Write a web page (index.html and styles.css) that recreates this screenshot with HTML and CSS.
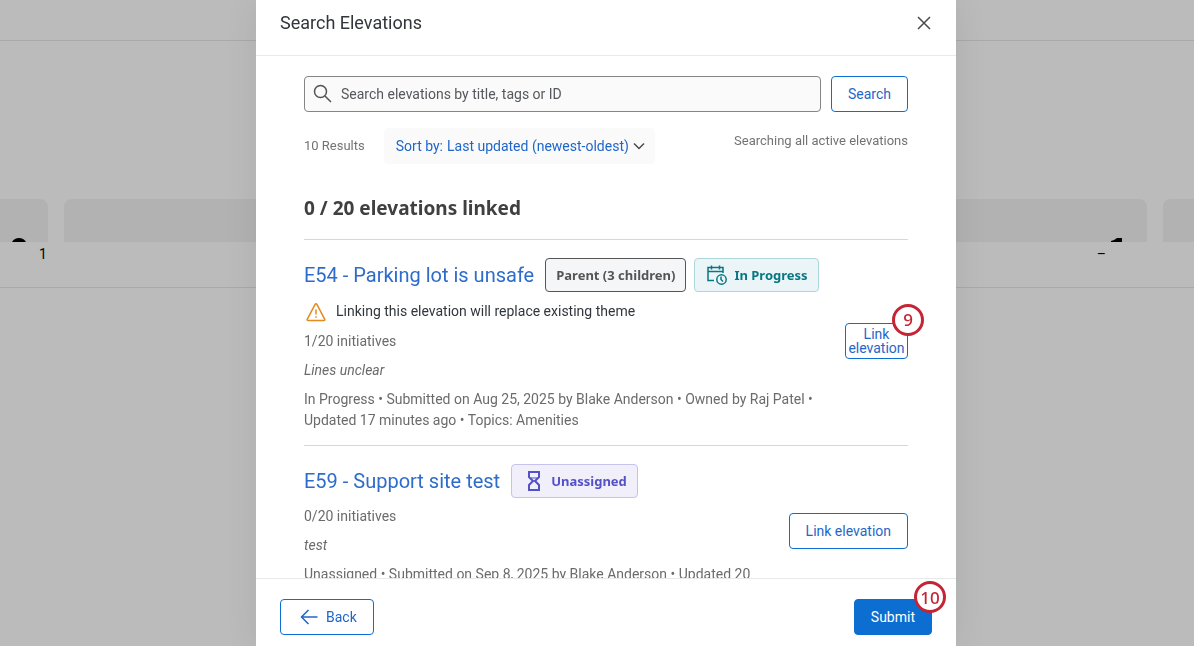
FILE: index.html
```html
<!DOCTYPE html>
<html lang="en">
<head>
<meta charset="UTF-8" />
<meta name="viewport" content="width=device-width, initial-scale=1" />
<title>Search Elevations</title>
<link rel="stylesheet" href="styles.css">
</head>
<body>

<!-- dashboard behind the dialog -->
<div class="page">
  <div class="page-top"></div>
  <div class="page-space"></div>
  <div class="cards">
    <div class="card card-left">
      <svg width="14" height="4" viewBox="0 0 14 4"><path d="M0 4C1.500 1.300 4 0 7 0s5.500 1.300 7 4z"/></svg>
    </div>
    <div class="card card-main">
      <svg width="11" height="4" viewBox="0 0 11 4"><path d="M0 4V3l3-1 3-2h5v4z"/></svg>
    </div>
    <div class="card card-right"></div>
  </div>
  <div class="counts">
    <span>1</span>
    <span>–</span>
  </div>
</div>

<div class="overlay">
  <div class="modal" role="dialog" aria-labelledby="modalTitle">
    <header class="modal-header">
      <h1 id="modalTitle">Search Elevations</h1>
      <button class="close" aria-label="Close">
        <svg width="16" height="16" viewBox="0 0 16 16"><path d="M2 2l12 12M14 2L2 14"/></svg>
      </button>
    </header>

    <main class="modal-body">
      <form class="search">
        <div class="search-box">
          <svg width="20" height="20" viewBox="0 0 20 20"><circle cx="7.500" cy="7.500" r="6"/><path d="M12 12l6 6"/></svg>
          <input type="text" aria-label="Search elevations" placeholder="Search elevations by title, tags or ID">
        </div>
        <button type="button" class="btn">Search</button>
      </form>

      <div class="filters">
        <span class="results">10 Results</span>
        <div class="sort">
          <label for="sort">Sort by:</label>
          <select id="sort">
            <option>Last updated (newest-oldest)</option>
          </select>
          <svg width="12" height="8" viewBox="0 0 12 8"><path d="M1 1.500l5 5 5-5"/></svg>
        </div>
        <span class="scope">Searching all active elevations</span>
      </div>

      <h2 class="linked">0 / 20 elevations linked</h2>

      <article class="item">
        <div class="info">
          <div class="item-title">
            <a href="#">E54 - Parking lot is unsafe</a>
            <span class="tag tag-parent">Parent (3 children)</span>
            <span class="tag tag-progress">
              <svg width="20" height="20" viewBox="0 0 20 20"><path d="M7 15.500H1V2.500H16V8M1 6.500h15M4.500.500v4M12.500.500v4"/><circle cx="14.500" cy="14.500" r="4.700"/><path d="M14 11.500v3l2 2"/></svg>
              In Progress
            </span>
          </div>
          <p class="warning">
            <svg width="20" height="20" viewBox="0 0 20 20"><path d="M10 1.800a1 1 0 0 1 .9.500l7.900 15a.9.900 0 0 1-.8 1.300H2a.9.900 0 0 1-.8-1.300l7.900-15a1 1 0 0 1 .9-.500z"/><path d="M10 7.500v5M10 14.200v1.600"/></svg>
            Linking this elevation will replace existing theme
          </p>
          <p>1/20 initiatives</p>
          <p class="note">Lines unclear</p>
          <p class="meta">In Progress • Submitted on Aug 25, 2025 by Blake Anderson • Owned by Raj Patel • Updated 17 minutes ago • Topics: Amenities</p>
        </div>
        <button class="btn btn-narrow">Link elevation<span class="step step-link">9</span></button>
      </article>

      <article class="item">
        <div class="info">
          <div class="item-title">
            <a href="#">E59 - Support site test</a>
            <span class="tag tag-unassigned">
              <svg width="14" height="20" viewBox="0 0 14 20"><path stroke-width="2" d="M2 1h10v5L8 10l4 4v5H2v-5l4-4-4-4z"/><path d="M4 7h6" stroke-width="1"/></svg>
              Unassigned
            </span>
          </div>
          <p>0/20 initiatives</p>
          <p class="note">test</p>
          <p class="meta">Unassigned • Submitted on Sep 8, 2025 by Blake Anderson • Updated 20</p>
        </div>
        <button class="btn">Link elevation</button>
      </article>
    </main>

    <footer class="modal-footer">
      <button class="btn btn-back">
        <svg width="18" height="16" viewBox="0 0 18 16"><path d="M17.500 8H1.500M8.500 1l-7 7 7 7"/></svg>
        Back
      </button>
      <button class="btn btn-primary">Submit<span class="step step-submit">10</span></button>
    </footer>
  </div>
</div>

</body>
</html>
```
FILE: styles.css
```css
* {
  box-sizing: border-box;
}
body {
  margin: 0;
  height: 100vh;
  overflow: hidden;
  background: #bbbbbb;
  font-family: Roboto, "Liberation Sans", sans-serif;
  font-size: 14px;
  color: #6b6b6b;
}
h1, h2, p {
  margin: 0;
}
svg {
  flex: none;
  fill: none;
  stroke: currentColor;
  stroke-width: 1.5;
}
button, input, select {
  font: inherit;
  color: inherit;
}

/* page behind */
.page {
  color: #000;
}
.page-top {
  height: 41px;
  border-bottom: 1px solid #a9a9a9;
}
.page-space {
  height: 158px;
}
.cards {
  display: grid;
  grid-template-columns: 48px 1fr 31px;
  gap: 16px;
}
.card {
  height: 43px;
  background: #b2b2b2;
  display: flex;
  align-items: flex-end;
}
.card svg {
  fill: #000;
  stroke: none;
}
.card-left {
  border-top-right-radius: 8px;
  padding-left: 12px;
}
.card-main {
  border-radius: 8px 8px 0 0;
  justify-content: flex-end;
  padding-right: 25px;
}
.card-right {
  border-top-left-radius: 8px;
}
.counts {
  display: flex;
  justify-content: space-between;
  height: 46px;
  padding: 4px 88px 0 39px;
  line-height: 17px;
  border-bottom: 1px solid #a9a9a9;
}

/* dialog */
.overlay {
  position: fixed;
  inset: 0;
  padding-left: 18px;
  display: flex;
  justify-content: center;
}
.modal {
  width: 700px;
  display: flex;
  flex-direction: column;
  background: #fff;
  box-shadow: 0 0 32px rgba(0, 0, 0, 0.08);
}
.modal-header {
  height: 56px;
  padding: 0 24px 10px;
  display: flex;
  align-items: center;
  justify-content: space-between;
  border-bottom: 1px solid #e9e9e9;
}
.modal-header h1 {
  font-size: 18px;
  font-weight: 400;
  color: #32363a;
}
.close {
  display: flex;
  padding: 0;
  border: none;
  background: none;
  color: #4a4a4a;
  cursor: pointer;
}
.modal-body {
  flex: 1;
  min-height: 0;
  overflow: hidden;
  padding: 20px 48px 0;
}
.btn {
  position: relative;
  flex: none;
  height: 36px;
  padding: 0 16px;
  border: 1px solid #0b6ed0;
  border-radius: 4px;
  background: #fff;
  color: #1f66ca;
  cursor: pointer;
}

.search {
  display: flex;
  gap: 10px;
}
.search-box {
  flex: 1;
  height: 36px;
  padding: 0 8px;
  display: flex;
  align-items: center;
  gap: 6px;
  border: 1px solid #858585;
  border-radius: 4px;
  background: #fafafa;
  color: #4f5256;
}
.search-box input {
  flex: 1;
  border: none;
  outline: none;
  background: none;
}
.search-box input::placeholder {
  color: #55585c;
}

.filters {
  display: flex;
  align-items: center;
  margin-top: 16px;
  font-size: 13px;
  color: #737373;
}
.results {
  padding-bottom: 2px;
}
.sort {
  display: flex;
  align-items: center;
  gap: 4px;
  height: 36px;
  margin-left: 19px;
  padding: 0 10px 0 12px;
  border-radius: 4px;
  background: #fafafa;
  font-size: 14px;
  color: #1f66ca;
}
.sort select {
  appearance: none;
  padding: 0;
  border: none;
  background: none;
}
.sort svg {
  color: #4a4a4a;
}
.scope {
  margin-left: auto;
  padding-bottom: 12px;
}
.linked {
  padding: 30px 0 17px;
  border-bottom: 1px solid #d8d8d8;
  font-family: "Noto Sans", sans-serif;
  font-size: 19px;
  font-weight: 700;
  line-height: 28px;
  color: #404040;
}

/* results */
.item {
  display: flex;
  align-items: center;
  justify-content: space-between;
  gap: 20px;
  padding: 18px 0 14px;
  border-bottom: 1px solid #d8d8d8;
}
.info {
  display: flex;
  flex-direction: column;
  gap: 8px;
  line-height: 21px;
}
.item .btn {
  margin-bottom: 8px;
}
.item-title {
  display: flex;
  align-items: center;
  gap: 8px;
}
.item-title a {
  margin-right: 3px;
  font-size: 20px;
  color: #2e6ccb;
  text-decoration: none;
}
.tag {
  display: flex;
  align-items: center;
  gap: 7px;
  height: 34px;
  padding: 0 10px 0 12px;
  border: 1px solid;
  border-radius: 4px;
  font-family: "Noto Sans", sans-serif;
  font-size: 13px;
  font-weight: 700;
}
.tag-parent {
  padding: 0 10px;
  border-color: #555;
  background: #f5f6f8;
  color: #555;
}
.tag-progress {
  border-color: #add6dc;
  background: #ebf5f7;
  color: #087784;
}
.tag-unassigned {
  gap: 10px;
  padding-left: 15px;
  border-color: #c5c3ee;
  background: #f0effa;
  color: #5450c8;
}
.warning {
  display: flex;
  align-items: center;
  gap: 10px;
  line-height: 23px;
  padding-left: 2px;
  color: #32363a;
}
.warning svg {
  color: #e38a1e;
}
.note {
  font-style: italic;
}
.meta {
  min-height: 42px;
}
.item .btn-narrow {
  flex: 0 0 63px;
  padding: 0;
  line-height: 14px;
}

.modal-footer {
  display: flex;
  justify-content: space-between;
  height: 68px;
  padding: 20px 24px 0;
  border-top: 1px solid #e9e9e9;
}
.btn-back {
  display: flex;
  align-items: center;
  gap: 8px;
  padding-left: 19px;
}
.btn-primary {
  background: #0b6ed0;
  color: #fff;
}

/* numbered callouts */
.step {
  position: absolute;
  display: flex;
  align-items: center;
  justify-content: center;
  width: 32px;
  height: 32px;
  border: 3px solid #c42434;
  border-radius: 50%;
  background: #fff;
  color: #c42434;
  font-family: "Noto Sans", sans-serif;
  font-size: 17px;
  font-weight: 500;
}
.step-link {
  top: -20px;
  right: -17px;
}
.step-submit {
  top: -19px;
  right: -15px;
}
```
